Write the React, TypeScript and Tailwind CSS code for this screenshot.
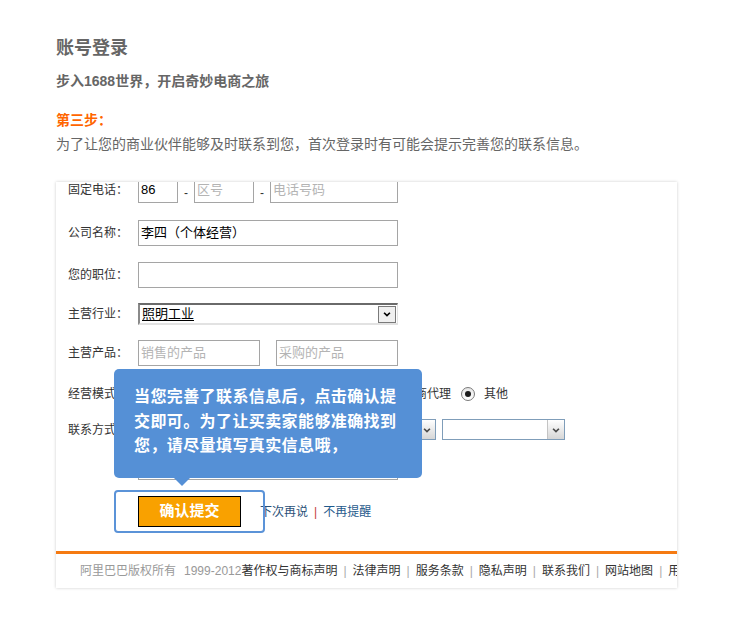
import React from "react";

const font = { fontFamily: '"Liberation Sans", "Noto Sans CJK SC", sans-serif' };

const Chevron = ({ className = "" }: { className?: string }) => (
  <svg viewBox="0 0 12 12" className={className} width="10" height="10">
    <path d="M2.5 4.5 L6 8 L9.5 4.5" fill="none" stroke="currentColor" strokeWidth="2" />
  </svg>
);

const Label = ({ text }: { text: string }) => (
  <div className="w-[70px] shrink-0 text-[12px] text-[#333] leading-[16px]">{text}</div>
);

const Input = ({
  w,
  h = 26,
  value,
  placeholder,
}: {
  w: number;
  h?: number;
  value?: string;
  placeholder?: string;
}) => (
  <div
    className="border border-[#a5a5a5] bg-white flex items-center pl-[2px] text-[13px] overflow-hidden"
    style={{ width: w, height: h }}
  >
    {value ? (
      <span className="text-black">{value}</span>
    ) : (
      <span className="text-[#b4b4b4]">{placeholder}</span>
    )}
  </div>
);

const XpSelect = ({ w }: { w: number }) => (
  <div className="flex h-[21px] border border-[#7f9db9] bg-white" style={{ width: w }}>
    <div className="flex-1" />
    <div className="w-[17px] h-full flex items-center justify-center bg-gradient-to-b from-white to-[#d6d6d6] border-l border-[#c4c4c4] text-[#4a4a4a]">
      <Chevron />
    </div>
  </div>
);

const Radio = ({ checked }: { checked?: boolean }) => (
  <span className="w-[14px] h-[14px] rounded-full border border-[#7a7a7a] bg-gradient-to-b from-[#e6e6e6] to-white flex items-center justify-center">
    {checked && <span className="w-[6px] h-[6px] rounded-full bg-[#1a1a1a]" />}
  </span>
);

export default function App() {
  const links = ["著作权与商标声明", "法律声明", "服务条款", "隐私声明", "联系我们", "网站地图", "用户协议"];

  return (
    <div className="w-[730px] h-[620px] bg-white pl-[56px] pt-[36px]" style={font}>
      <h1 className="text-[18px] leading-[24px] font-bold text-[#666]">账号登录</h1>
      <p className="mt-[11px] text-[14px] leading-[20px] font-bold text-[#666]">步入1688世界，开启奇妙电商之旅</p>
      <p className="mt-[19px] text-[14px] leading-[20px] font-bold text-[#ff6600]">第三步：</p>
      <p className="mt-[4px] text-[14px] leading-[20px] text-[#666]">
        为了让您的商业伙伴能够及时联系到您，首次登录时有可能会提示完善您的联系信息。
      </p>

      <div className="relative mt-[28px] w-[621px] h-[406px] overflow-hidden bg-white shadow-[0_0_3px_rgba(0,0,0,0.2)]">
        <div className="-mt-[5px]">
          <div className="pl-[12px]">
            {/* 固定电话 */}
            <div className="flex items-center h-[26px]">
              <Label text="固定电话：" />
              <Input w={40} value="86" />
              <span className="w-[16px] text-center text-[12px] text-[#333] pt-[6px]">-</span>
              <Input w={60} placeholder="区号" />
              <span className="w-[16px] text-center text-[12px] text-[#333] pt-[6px]">-</span>
              <Input w={128} placeholder="电话号码" />
            </div>

            <div className="flex items-center mt-[17px] h-[26px]">
              <Label text="公司名称：" />
              <Input w={260} value="李四（个体经营）" />
            </div>

            <div className="flex items-center mt-[16px] h-[26px]">
              <Label text="您的职位：" />
              <Input w={260} />
            </div>

            <div className="flex items-center mt-[15px] h-[22px]">
              <Label text="主营行业：" />
              <div className="w-[260px] h-[22px] flex items-center border-t-2 border-l-2 border-t-[#6a6a6a] border-l-[#8a8a8a] border-b-2 border-r border-b-[#e2e2e2] border-r-[#e2e2e2] bg-white">
                <span className="flex-1 pl-[2px] text-[13px] text-black underline underline-offset-2">照明工业</span>
                <span className="w-[18px] h-[17px] mr-[1px] flex items-center justify-center border border-[#7a7a7a] bg-[#f0f0f0] text-black">
                  <Chevron />
                </span>
              </div>
            </div>

            <div className="flex items-center mt-[15px] h-[26px]">
              <Label text="主营产品：" />
              <Input w={122} placeholder="销售的产品" />
              <div className="w-[16px]" />
              <Input w={122} placeholder="采购的产品" />
            </div>

            <div className="flex items-center mt-[18px] h-[20px]">
              <Label text="经营模式：" />
              <div className="flex items-center pl-[247px] text-[12px] text-[#333]">
                <span className="flex items-center gap-[4px]">
                  <Radio />
                  招商代理
                </span>
                <span className="flex items-center gap-[9px] ml-[10px]">
                  <Radio checked />
                  其他
                </span>
              </div>
            </div>

            <div className="flex items-center mt-[15px] h-[21px]">
              <Label text="联系方式：" />
              <XpSelect w={140} />
              <div className="w-[6px]" />
              <XpSelect w={152} />
              <div className="w-[6px]" />
              <XpSelect w={123} />
            </div>

            <div className="flex items-center mt-[14px] h-[26px]">
              <div className="w-[70px]" />
              <Input w={260} />
            </div>

            <div className="flex items-center mt-[16px] h-[31px]">
              <div className="w-[70px]" />
              <button className="w-[103px] h-[31px] bg-[#f9a100] border border-black text-white text-[15px] font-bold">
                确认提交
              </button>
              <div className="ml-[19px] flex items-center text-[12px]">
                <span className="text-[#2a4f78]">下次再说</span>
                <span className="px-[6px] text-[#c43c3c]">|</span>
                <span className="text-[#1f5a8c]">不再提醒</span>
              </div>
            </div>
          </div>

          <div className="mt-[24px] h-[3px] bg-[#f57a12]" />

          <div className="h-[34px] flex items-center pl-[24px] whitespace-nowrap text-[12px] overflow-hidden">
            <span className="text-[#999]">阿里巴巴版权所有</span>
            <span className="text-[#999] ml-[8px]">1999-2012</span>
            {links.map((l, i) => (
              <span key={l} className="flex items-center">
                {i > 0 && <span className="px-[6px] text-[#aaa]">|</span>}
                <span className="text-[#333]">{l}</span>
              </span>
            ))}
          </div>
        </div>

        {/* guide tooltip */}
        <div className="absolute left-[58px] top-[187px] w-[308px] h-[109px] rounded-[5px] bg-[#5590d6] pl-[20px] pt-[16px] text-white text-[16px] font-bold leading-[24.5px] tracking-[0.4px]">
          当您完善了联系信息后，点击确认提
          <br />
          交即可。为了让买卖家能够准确找到
          <br />
          您，请尽量填写真实信息哦，
        </div>
        <div className="absolute left-[118px] top-[296px] w-0 h-0 border-l-[8px] border-r-[8px] border-t-[8px] border-l-transparent border-r-transparent border-t-[#5590d6]" />
        <div className="absolute left-[58px] top-[308px] w-[151px] h-[43px] rounded-[4px] border-2 border-[#5b93d8]" />
      </div>
    </div>
  );
}
